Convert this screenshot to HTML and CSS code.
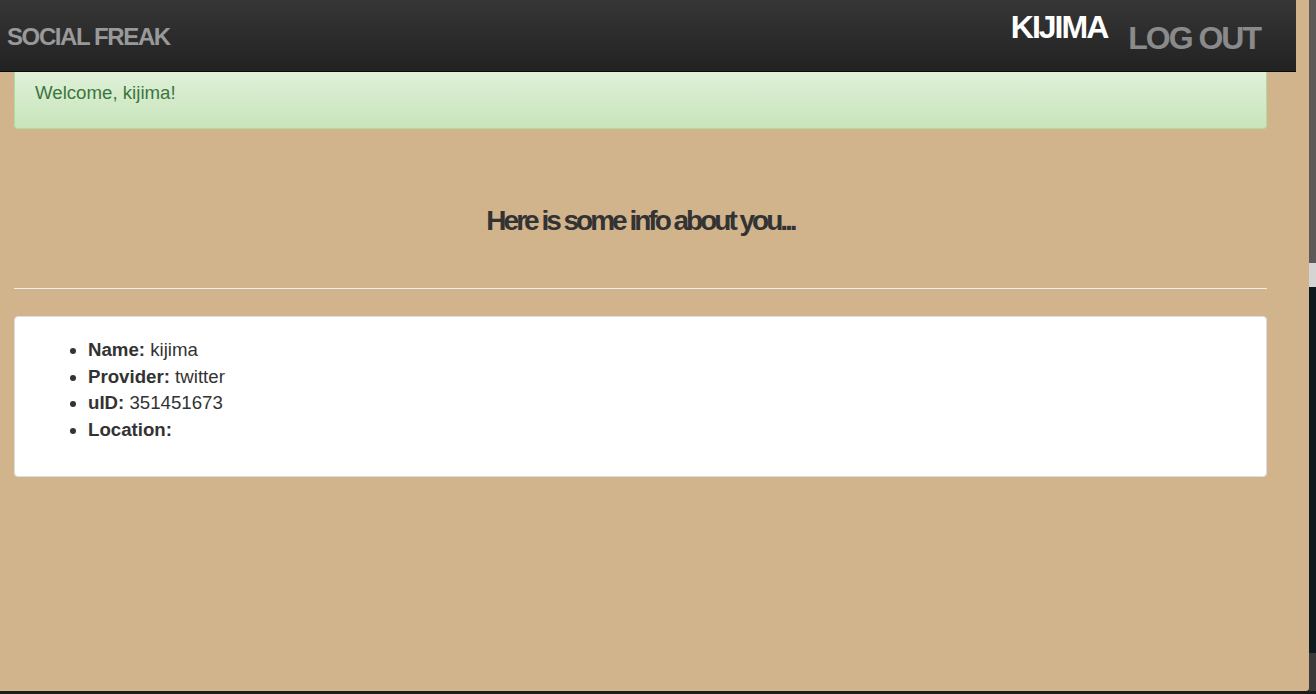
FILE: index.html
```html
<!DOCTYPE html>
<html>
<head>
<meta charset="utf-8">
<link rel="stylesheet" href="styles.css">
</head>
<body>
<div class="screen">
  <div class="window">
    <nav class="navbar">
      <a class="brand">SOCIAL FREAK</a>
      <div class="nav-right">
        <span class="user">KIJIMA</span>
        <a class="logout">LOG OUT</a>
      </div>
    </nav>
    <div class="container">
      <div class="alert">Welcome, kijima!</div>
      <h2 class="title">Here is some info about you...</h2>
      <hr class="rule">
      <div class="panel">
        <ul class="info">
          <li><b>Name:</b> kijima</li>
          <li><b>Provider:</b> twitter</li>
          <li><b>uID:</b> 351451673</li>
          <li><b>Location:</b></li>
        </ul>
      </div>
    </div>
  </div>
  <div class="desk">
    <div class="d1"></div>
    <div class="d2"></div>
    <div class="d3"></div>
    <div class="d4"></div>
  </div>
</div>
</body>
</html>
```

FILE: styles.css
```css
html, body {
  margin: 0;
  padding: 0;
}
body {
  width: 1316px;
  height: 694px;
  overflow: hidden;
  background: #1c1c1c;
  font-family: "Liberation Sans", Arial, sans-serif;
  color: #333;
}
.screen {
  display: flex;
  height: 691px;
}
.window {
  width: 1309px;
  height: 691px;
  background: #d2b48c;
  border-bottom-right-radius: 3px;
  overflow: hidden;
}
.navbar {
  width: 1296px;
  height: 71px;
  background: linear-gradient(#363636, #222);
  border-bottom: 1px solid #0a0a0a;
  display: flex;
  justify-content: space-between;
  box-sizing: content-box;
}
.brand {
  color: #999;
  font-weight: bold;
  font-size: 24px;
  letter-spacing: -1.4px;
  padding: 23px 0 0 7px;
  line-height: 28px;
}
.nav-right {
  display: flex;
  align-items: flex-start;
  padding-right: 36px;
}
.user {
  color: #fff;
  font-weight: bold;
  font-size: 32px;
  letter-spacing: -2px;
  line-height: 36px;
  padding-top: 9px;
  margin-right: 21px;
}
.logout {
  color: #8a8a8a;
  font-weight: bold;
  font-size: 32px;
  letter-spacing: -2px;
  line-height: 36px;
  padding-top: 20px;
}
.container {
  width: 1253px;
  margin-left: 14px;
}
.alert {
  height: 48px;
  padding: 8px 20px 0;
  background: linear-gradient(#dff0d8, #c8e5bc);
  border: 1px solid #b2dba1;
  border-top: none;
  border-radius: 0 0 4px 4px;
  color: #3c763d;
  font-size: 18.67px;
  line-height: 26.67px;
}
.title {
  margin: 76px 0 0;
  text-align: center;
  font-size: 28px;
  line-height: 32px;
  letter-spacing: -3px;
  font-weight: bold;
  color: #333;
}
.rule {
  margin: 51px 0 0;
  border: 0;
  border-top: 1px solid #eeeeee;
  height: 0;
}
.panel {
  margin-top: 27px;
  background: #fff;
  border: 1px solid #ddd;
  border-radius: 4px;
  padding: 20px 0 32px;
}
.info {
  margin: 0;
  padding-left: 73px;
  font-size: 18.67px;
  line-height: 26.67px;
  color: #333;
}
.desk {
  width: 7px;
  display: flex;
  flex-direction: column;
}
.d1 { height: 263px; background: #5e5959; }
.d2 { height: 24px; background: #d4d4d4; }
.d3 { height: 366px; background: #0d1b21; }
.d4 { flex: 1; background: #3a3a3a; }
```
